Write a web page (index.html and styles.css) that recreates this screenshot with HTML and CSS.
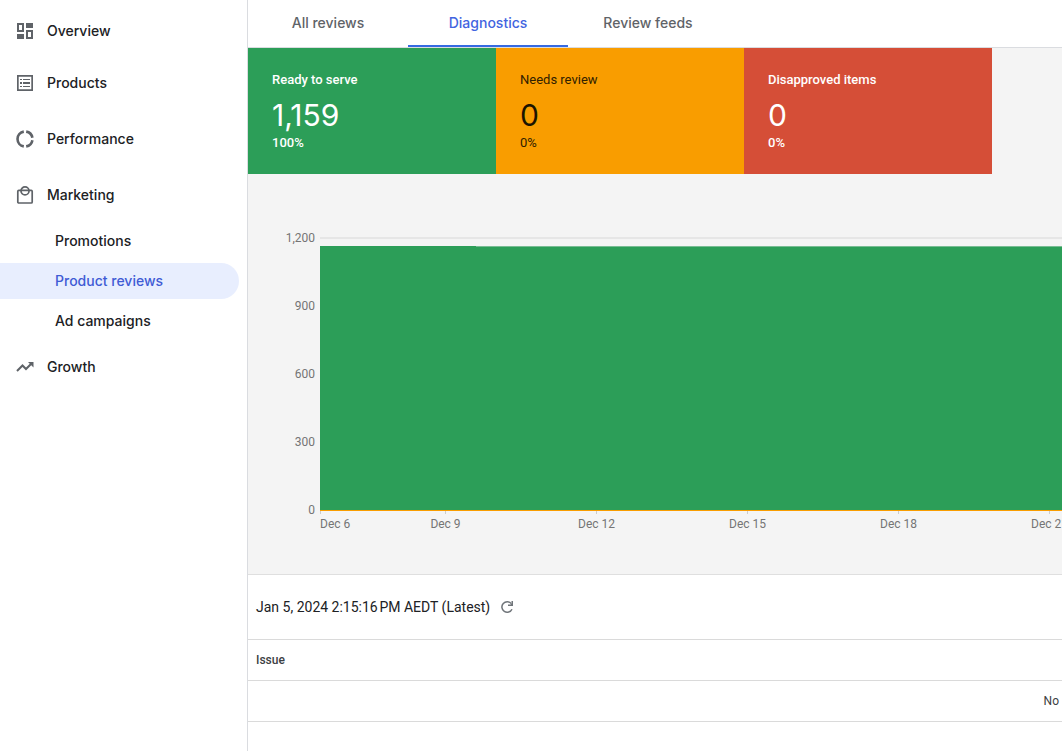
FILE: index.html
```html
<!DOCTYPE html>
<html lang="en">
<head>
<meta charset="utf-8">
<title>Product reviews</title>
<link rel="stylesheet" href="styles.css">
</head>
<body>
<div class="app">
  <nav class="sidebar" aria-label="Main">
    <ul class="nav-list">
      <li><a class="nav-item" href="#"><svg class="icon" viewBox="0 0 18 18"><path fill-rule="evenodd" d="M1 1h7v9H1zM3 3v5h3V3zM10 1h7v5h-7zM1 12h7v5H1zM10 8h7v9h-7zM12 10v5h3v-5z"/></svg>Overview</a></li>
      <li><a class="nav-item" href="#"><svg class="icon" viewBox="0 0 18 18"><path fill-rule="evenodd" d="M1 1h16v16H1zM2.700 2.700v12.600h12.600V2.700zM4 5h2v1H4zM7 5h7v1H7zM4 8h2v2H4zM7 8h7v2H7zM4 12h2v1H4zM7 12h7v1H7z"/></svg>Products</a></li>
      <li class="spaced"><a class="nav-item" href="#"><svg class="icon" viewBox="0 0 18 18"><path class="ring" d="M7.800 1.600A7.500 7.500 0 0 0 7.800 16.400M10.200 16.400A7.500 7.500 0 0 0 16.400 10.200M16.400 7.800A7.500 7.500 0 0 0 10.200 1.600"/></svg>Performance</a></li>
      <li class="spaced"><a class="nav-item" href="#"><svg class="icon" viewBox="0 0 18 18"><rect class="bag" x="1.800" y="4.400" width="14.400" height="12.600" rx="1"/><circle class="bag" cx="9" cy="4.900" r="4"/></svg>Marketing</a>
        <ul class="sub-list">
          <li><a class="sub-item" href="#">Promotions</a></li>
          <li><a class="sub-item selected" href="#" aria-current="page">Product reviews</a></li>
          <li><a class="sub-item" href="#">Ad campaigns</a></li>
        </ul>
      </li>
      <li><a class="nav-item" href="#"><svg class="icon" viewBox="0 0 18 18"><path class="stroke" d="M1 13l5.500-5.500 3.500 3.500 6-6"/><path d="M12 4h5.500v5.500z"/></svg>Growth</a></li>
    </ul>
  </nav>
  <main class="content">
    <div class="tabs" role="tablist">
      <button class="tab" role="tab">All reviews</button>
      <button class="tab active" role="tab" aria-selected="true">Diagnostics</button>
      <button class="tab" role="tab">Review feeds</button>
    </div>
    <section class="diagnostics">
      <div class="cards">
        <div class="card ready"><span class="label">Ready to serve</span><span class="count">1,159</span><span class="share">100%</span></div>
        <div class="card review"><span class="label">Needs review</span><span class="count">0</span><span class="share">0%</span></div>
        <div class="card disapproved"><span class="label">Disapproved items</span><span class="count">0</span><span class="share">0%</span></div>
      </div>
      <div class="chart">
        <div class="y-axis"><span>1,200</span><span>900</span><span>600</span><span>300</span><span>0</span></div>
        <div class="plot">
          <svg class="area" height="274" aria-hidden="true">
            <rect width="100%" height="2" fill="#e6e6e6"/>
            <rect y="9" width="100%" height="264" fill="#2c9e58"/>
            <rect x="156" y="9" width="100%" height="1" fill="#78bc93"/>
            <rect y="273" width="100%" height="1" fill="#f99d00"/>
          </svg>
          <div class="x-axis"><span class="first">Dec 6</span><span>Dec 9</span><span>Dec 12</span><span>Dec 15</span><span>Dec 18</span><span>Dec 21</span></div>
        </div>
      </div>
    </section>
    <div class="snapshot">
      <span>Jan 5, 2024 2:15:16&#8239;PM AEDT (Latest)</span>
      <button class="refresh" aria-label="Refresh"><svg class="refresh-icon" viewBox="0 0 14 14"><path class="refresh-arc" d="M11.300 3.600A5.300 5.300 0 1 0 12 9.200"/><path d="M13 1v5H8V4.500h2.500l1-1V1z"/></svg></button>
    </div>
    <table class="issues">
      <thead><tr><th scope="col">Issue</th></tr></thead>
      <tbody><tr><td>No</td></tr></tbody>
    </table>
  </main>
</div>
</body>
</html>
```
FILE: styles.css
```css
* { box-sizing: border-box; }
body {
  margin: 0;
  background: #fff;
  color: #202124;
  font-family: Roboto, sans-serif;
}
ul { list-style: none; margin: 0; padding: 0; }
button { border: 0; background: none; padding: 0; cursor: pointer; }
.app { display: flex; min-height: 100vh; overflow: hidden; }

.sidebar {
  flex: 0 0 248px;
  border-right: 1px solid #dadce0;
  padding: 7px 8px 0 0;
  font: 500 14px/20px Inter, sans-serif;
}
.nav-list, .sub-list { display: flex; flex-direction: column; gap: 4px; }
.spaced, .sub-list { margin-top: 4px; }
.nav-item, .sub-item {
  display: flex;
  align-items: center;
  color: #202124;
  text-decoration: none;
}
.nav-item { height: 48px; padding-left: 16px; gap: 13px; }
.sub-item { height: 36px; padding-left: 55px; border-radius: 0 18px 18px 0; }
.selected { background: #e8eefe; color: #3f5bd5; }
.icon { width: 18px; height: 18px; fill: #5f6368; overflow: visible; }
.ring { fill: none; stroke: #5f6368; stroke-width: 2.6; }
.stroke { fill: none; stroke: #5f6368; stroke-width: 2; }
.bag { fill: none; stroke: #5f6368; stroke-width: 1.7; }

.content { flex: 1; min-width: 0; }
.tabs { display: flex; height: 48px; border-bottom: 1px solid #dadce0; }
.tab {
  width: 160px;
  border-bottom: 2px solid transparent;
  color: #5f6368;
  font: 500 14px/20px Inter, sans-serif;
}
.active { color: #4264e0; border-bottom-color: #366ae2; }

.diagnostics {
  background: #f4f4f4;
  border-bottom: 1px solid #dfdfdf;
  padding-bottom: 42px;
}
.cards { display: flex; }
.card {
  display: flex;
  flex-direction: column;
  width: 248px;
  height: 126px;
  padding: 24px 24px 0;
  font-size: 13px;
  line-height: 16px;
  color: #fff;
  font-weight: 500;
}
.ready { background: #2c9e58; }
.review { background: #f99d00; color: #2f2000; font-weight: 400; }
.disapproved { background: #d54e37; }
.count { margin-top: 7px; font: 30px/40px Inter, sans-serif; }
.review .count { color: #1c1400; }

.chart {
  display: flex;
  margin-top: 56px;
  font-size: 12px;
  line-height: 16px;
  color: #757575;
}
.y-axis {
  display: flex;
  flex-direction: column;
  justify-content: space-between;
  flex: 0 0 72px;
  height: 288px;
  padding-right: 5px;
  text-align: right;
}
.plot { flex: 1; min-width: 0; padding-top: 7px; }
.area { display: block; width: 100%; }
.x-axis { display: flex; overflow: hidden; }
.x-axis span {
  display: flex;
  flex: 0 0 151px;
  flex-direction: column;
  align-items: center;
  gap: 2px;
}
.x-axis span::before { content: ""; width: 1px; height: 3px; background: #ccc; }
.x-axis .first { flex-basis: 50px; align-items: flex-start; }

.snapshot {
  display: flex;
  align-items: center;
  gap: 10px;
  height: 64px;
  padding-left: 8px;
  font-size: 14px;
  line-height: 20px;
}
.refresh { display: flex; }
.refresh-icon { width: 14px; height: 14px; fill: #70757a; }
.refresh-arc { fill: none; stroke: #70757a; stroke-width: 1.5; }

.issues {
  width: 100%;
  border-collapse: collapse;
  font-size: 12px;
  line-height: 16px;
  color: #3c4043;
}
.issues th, .issues td {
  height: 41px;
  padding: 0 3px 0 8px;
  border-top: 1px solid #dadada;
  border-bottom: 1px solid #dadada;
}
.issues th { text-align: left; font-weight: 500; }
.issues td { text-align: right; }
```
